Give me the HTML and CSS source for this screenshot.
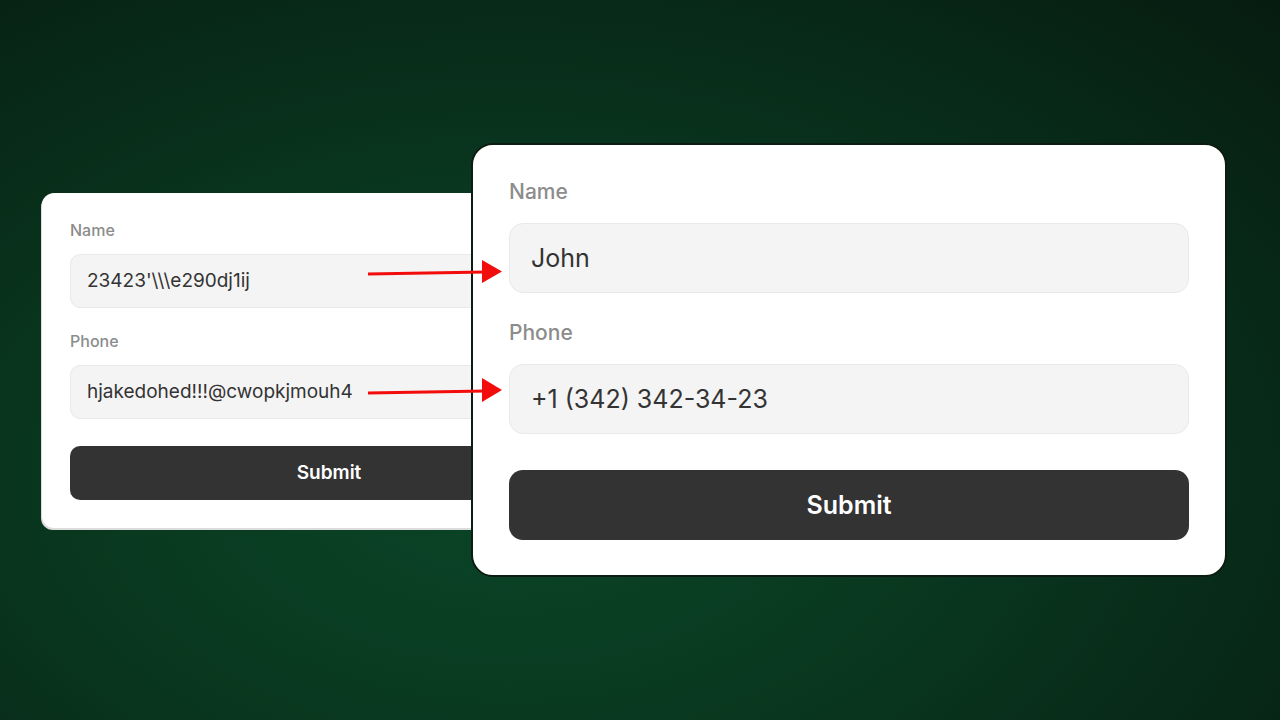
FILE: index.html
```html
<!DOCTYPE html>
<html lang="en">
<head>
<meta charset="utf-8">
<title>Input masking</title>
<link rel="stylesheet" href="styles.css">
</head>
<body>
<main class="stage">
  <form class="card card-small">
    <label class="label">Name</label>
    <div class="field">23423'\\\e290dj1ij</div>
    <label class="label label-gap">Phone</label>
    <div class="field">hjakedohed!!!@cwopkjmouh4</div>
    <button type="button" class="submit">Submit</button>
  </form>
  <form class="card card-large">
    <label class="label">Name</label>
    <div class="field">John</div>
    <label class="label label-gap">Phone</label>
    <div class="field">+1 (342) 342-34-23</div>
    <button type="button" class="submit">Submit</button>
  </form>
  <svg class="arrows" width="1280" height="720" viewBox="0 0 1280 720" aria-hidden="true">
    <line x1="368" y1="274" x2="486" y2="272" stroke="#f20c0c" stroke-width="3"/>
    <polygon points="482,260 502,271.5 482,283" fill="#f20c0c"/>
    <line x1="368" y1="393" x2="486" y2="391" stroke="#f20c0c" stroke-width="3"/>
    <polygon points="482,378 502,390 482,402" fill="#f20c0c"/>
  </svg>
</main>
</body>
</html>
```
FILE: styles.css
```css
* { box-sizing: border-box; }
html, body {
  margin: 0;
  width: 1280px;
  height: 720px;
  overflow: hidden;
}
body {
  font-family: Inter, "Noto Sans", "Liberation Sans", sans-serif;
  background: radial-gradient(ellipse 85% 95% at 40% 66%, #0b4528 0%, #093a20 35%, #082c19 65%, #061b10 100%);
}
.stage {
  position: relative;
  height: 720px;
  display: flex;
  align-items: center;
  padding-left: 42px;
}
.card {
  background: #fff;
  display: flex;
  flex-direction: column;
  flex: none;
}
.card-small {
  width: 574px;
  border-radius: 12px;
  padding: 27px 28px 28px;
  box-shadow: -1px 2px 0 #dcdcdc;
}
.card-large {
  width: 756px;
  margin-left: -145px;
  border: 2px solid #0c1c12;
  border-radius: 22px;
  padding: 35px 36px 35px 36px;
  position: relative;
  z-index: 1;
}
.label {
  color: #8c8c8c;
  font-weight: 500;
}
.card-small .label { font-size: 16px; line-height: 20px; margin-bottom: 14px; }
.card-large .label { font-size: 21px; line-height: 24px; margin-bottom: 19px; }
.card-small .label-gap { margin-top: 23px; }
.card-large .label-gap { margin-top: 28px; }
.field {
  background: #f4f4f4;
  border: 1px solid #e9e9e9;
  color: #333;
  display: flex;
  align-items: center;
}
.card-small .field {
  height: 54px;
  border-radius: 10px;
  padding-left: 16px;
  font-size: 19px;
}
.card-large .field {
  height: 70px;
  border-radius: 14px;
  padding-left: 21px;
  font-size: 25px;
}
.submit {
  background: #333;
  color: #fff;
  border: none;
  font-family: inherit;
  font-weight: 600;
  cursor: pointer;
}
.card-small .submit {
  margin-top: 27px;
  height: 54px;
  border-radius: 10px;
  font-size: 19px;
}
.card-large .submit {
  margin-top: 36px;
  height: 70px;
  border-radius: 14px;
  font-size: 25px;
}
.arrows {
  position: absolute;
  left: 0;
  top: 0;
  z-index: 2;
  pointer-events: none;
}
```
